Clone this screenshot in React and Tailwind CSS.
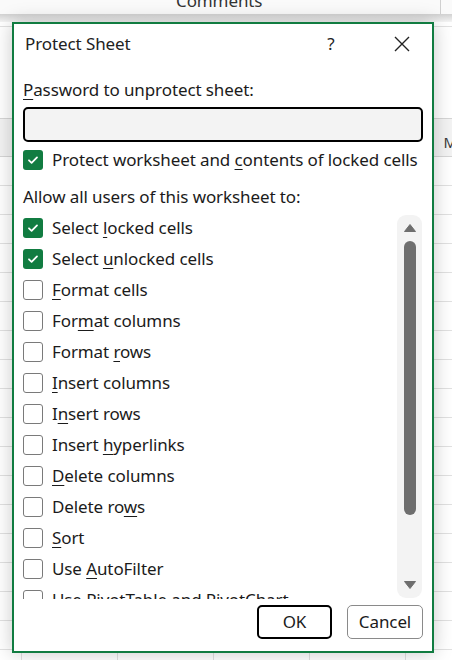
import React from 'react';

const items = [
  { pre: 'Select ', key: 'l', post: 'ocked cells', checked: true },
  { pre: 'Select ', key: 'u', post: 'nlocked cells', checked: true },
  { pre: '', key: 'F', post: 'ormat cells' },
  { pre: 'For', key: 'm', post: 'at columns' },
  { pre: 'Format ', key: 'r', post: 'ows' },
  { pre: '', key: 'I', post: 'nsert columns' },
  { pre: 'I', key: 'n', post: 'sert rows' },
  { pre: 'Insert ', key: 'h', post: 'yperlinks' },
  { pre: '', key: 'D', post: 'elete columns' },
  { pre: 'Delete ro', key: 'w', post: 's' },
  { pre: '', key: 'S', post: 'ort' },
  { pre: 'Use ', key: 'A', post: 'utoFilter' },
  { pre: 'Use PivotTable and PivotChart', key: '', post: '' },
];

const Checkbox = ({ checked }) =>
  checked ? (
    <div className="w-[20px] h-[20px] rounded-[3px] bg-[#117c41] flex items-center justify-center shrink-0">
      <svg width="14" height="14" viewBox="0 0 14 14">
        <path d="M3 7.3l2.6 2.5L11 4.4" fill="none" stroke="white" strokeWidth="1.8" strokeLinecap="round" strokeLinejoin="round" />
      </svg>
    </div>
  ) : (
    <div className="w-[20px] h-[20px] rounded-[3px] border-[1.5px] border-[#7a7a7a] bg-white shrink-0" />
  );

const Label = ({ pre, k, post }) => (
  <span>
    {pre}
    {k && <span className="underline underline-offset-[3px] decoration-1">{k}</span>}
    {post}
  </span>
);

export default function App() {
  const rows = Array.from({ length: 18 });
  return (
    <div
      className="relative w-[452px] h-[660px] overflow-hidden bg-white text-[#1b1b1b] tracking-[-0.1px]"
      style={{ fontFamily: '"Noto Sans", "Open Sans", sans-serif' }}
    >
      {/* spreadsheet behind */}
      <div className="h-[14px] bg-[#fafafa] relative overflow-hidden flex">
        <div className="w-[441px] border-r border-[#d0d0d0] relative">
          <span className="absolute left-[176px] top-[-12px] text-[17px] text-[#333]">Comments</span>
        </div>
      </div>
      <div className="h-[8px] bg-gradient-to-b from-[#d2d2d2] to-[#f4f4f4]" />
      <div className="h-[5px] border-b border-[#e1e1e1]" />
      <div className="h-[91px]" />
      <div className="h-[39px] bg-[#f3f3f3] border-y border-[#d6d6d6] flex items-center justify-end">
        <span className="text-[15px] text-[#3a3a3a] mr-[-5px] mt-[10px]">M</span>
      </div>
      {rows.map((_, i) => (
        <div key={i} className="h-[29px] border-b border-[#e1e1e1] grid grid-cols-[22px_96px_96px_96px_96px_1fr]">
          <div className="border-r border-[#e1e1e1]" />
          <div className="border-r border-[#e1e1e1]" />
          <div className="border-r border-[#e1e1e1]" />
          <div className="border-r border-[#e1e1e1]" />
          <div className="border-r border-[#e1e1e1]" />
          <div />
        </div>
      ))}

      {/* dialog */}
      <div className="absolute left-[12px] top-[22px] w-[422px] h-[631px] border-2 border-[#117c41] bg-white shadow-[0_0_18px_rgba(0,0,0,0.22)] flex flex-col">
        <div className="h-[40px] flex items-center pl-[11px] text-[17px] text-[#222]">
          <span className="flex-1">Protect Sheet</span>
          <span className="w-[20px] text-center mr-[53px]">?</span>
          <svg width="16" height="16" viewBox="0 0 16 16" className="mr-[22px]">
            <path d="M1 1L15 15M15 1L1 15" stroke="#222" strokeWidth="1.4" />
          </svg>
        </div>

        <div className="mt-[14px] pl-[9px] text-[17px] leading-[24px]">
          <Label pre="" k="P" post="assword to unprotect sheet:" />
        </div>
        <div className="mt-[5px] mx-[9px] h-[35px] rounded-[5px] border-2 border-black bg-[#f3f3f3]" />

        <div className="mt-[6px] pl-[9px] h-[24px] flex items-center gap-[9px] text-[17px]">
          <Checkbox checked />
          <Label pre="Protect worksheet and " k="c" post="ontents of locked cells" />
        </div>

        <div className="mt-[13px] pl-[9px] text-[17px] leading-[24px]">Allow all users of this worksheet to:</div>

        <div className="mt-[3px] h-[387px] flex">
          <div className="flex-1 overflow-hidden pl-[9px]">
            {items.map((it, i) => (
              <div key={i} className="h-[31px] flex items-center gap-[9px] text-[17px] whitespace-nowrap">
                <Checkbox checked={it.checked} />
                <Label pre={it.pre} k={it.key} post={it.post} />
              </div>
            ))}
          </div>
          <div className="mt-[3px] mr-[10px] w-[25px] h-[383px] rounded-[9px] bg-[#f3f3f3] flex flex-col items-center py-[8px]">
            <svg width="14" height="10" viewBox="0 0 14 10">
              <path d="M7 1.5L12.5 8.5H1.5Z" fill="#6e6e6e" stroke="#6e6e6e" strokeLinejoin="round" />
            </svg>
            <div className="mt-[8px] w-[12px] h-[274px] rounded-full bg-[#6e6e6e]" />
            <div className="flex-1" />
            <svg width="14" height="10" viewBox="0 0 14 10">
              <path d="M7 8.5L12.5 1.5H1.5Z" fill="#6e6e6e" stroke="#6e6e6e" strokeLinejoin="round" />
            </svg>
          </div>
        </div>

        <div className="mt-[6px] flex justify-end gap-[15px] pr-[9px] text-[17px]">
          <button className="w-[75px] h-[34px] rounded-[5px] border-2 border-black bg-white">OK</button>
          <button className="w-[76px] h-[34px] rounded-[5px] border border-[#8a8a8a] bg-white">Cancel</button>
        </div>
      </div>
    </div>
  );
}
